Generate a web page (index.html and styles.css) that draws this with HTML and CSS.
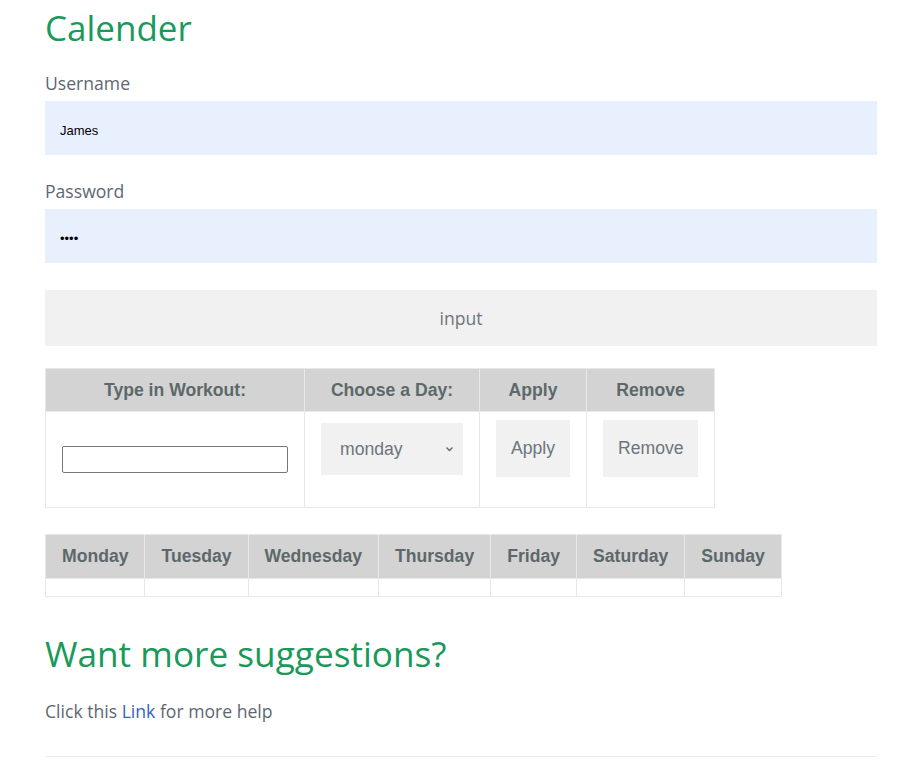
FILE: index.html
```html
<!DOCTYPE html>
<html>
<head>
<meta charset="utf-8">
<title>Calender</title>
<link rel="stylesheet" href="styles.css">
</head>
<body>
<div class="page">
  <h1 class="title">Calender</h1>
  <form class="login">
    <label class="field-label" for="username">Username</label>
    <input class="field" id="username" type="text" value="James">
    <label class="field-label pw-label" for="password">Password</label>
    <input class="field" id="password" type="password" value="abcd">
    <button class="submit" type="button">input</button>
  </form>

  <table class="workout">
    <thead>
      <tr>
        <th class="c1">Type in Workout:</th>
        <th class="c2">Choose a Day:</th>
        <th class="c3">Apply</th>
        <th class="c4">Remove</th>
      </tr>
    </thead>
    <tbody>
      <tr>
        <td class="cell-input"><input class="workout-input" type="text"></td>
        <td class="cell-select">
          <div class="select">
            <span>monday</span>
            <svg class="chev" width="9" height="6" viewBox="0 0 9 6"><path d="M1.5 1.5 L4.5 4.5 L7.5 1.5" fill="none" stroke="#666" stroke-width="1.4"/></svg>
          </div>
        </td>
        <td class="cell-btn"><button class="gbtn apply" type="button">Apply</button></td>
        <td class="cell-btn"><button class="gbtn remove" type="button">Remove</button></td>
      </tr>
    </tbody>
  </table>

  <table class="week">
    <thead>
      <tr>
        <th>Monday</th>
        <th>Tuesday</th>
        <th>Wednesday</th>
        <th>Thursday</th>
        <th>Friday</th>
        <th>Saturday</th>
        <th>Sunday</th>
      </tr>
    </thead>
    <tbody>
      <tr><td></td><td></td><td></td><td></td><td></td><td></td><td></td></tr>
    </tbody>
  </table>

  <h2 class="subtitle">Want more suggestions?</h2>
  <p class="help">Click this <a href="#" class="link">Link</a> for more help</p>
  <hr class="rule">
</div>
</body>
</html>
```

FILE: styles.css
```css
html, body {
  margin: 0;
  padding: 0;
  background: #ffffff;
}
body {
  font-family: "Open Sans", "Liberation Sans", sans-serif;
  color: #5d6770;
}
.page {
  width: 832px;
  margin-left: 45px;
  padding-top: 6px;
}
.title {
  font-size: 35px;
  line-height: 43px;
  font-weight: 400;
  color: #19995a;
  margin: 0 0 21px 0;
}
.login {
  display: flex;
  flex-direction: column;
}
.field-label {
  font-size: 17.6px;
  line-height: 27px;
  margin-bottom: 4px;
}
.pw-label {
  margin-top: 23px;
}
.field {
  height: 54px;
  box-sizing: border-box;
  border: none;
  background: #e8f0fe;
  padding: 4px 15px 0 15px;
  font-family: "Liberation Sans", Arial, sans-serif;
  font-size: 13px;
  color: #000;
  outline: none;
}
.submit {
  margin-top: 27px;
  height: 56px;
  border: none;
  background: #f1f1f1;
  font-family: "Open Sans", sans-serif;
  font-size: 17.6px;
  color: #6c757d;
}
table {
  border-collapse: collapse;
  font-family: "Liberation Sans", Arial, sans-serif;
}
th {
  background: #d3d3d3;
  color: #5d686a;
  font-weight: 700;
  font-size: 17.6px;
  line-height: 21px;
  height: 43px;
  box-sizing: border-box;
  border: 1px solid #e8e8e8;
  padding: 0 16px;
}
td {
  border: 1px solid #e8e8e8;
  padding: 0;
}
.workout {
  margin-top: 22px;
}
.workout .c1 { width: 258px; padding: 0; }
.workout .c2 { width: 174px; padding: 0; }
.workout .c3 { width: 106px; padding: 0; }
.workout .c4 { width: 128px; padding: 0; }
.workout td {
  height: 96px;
  box-sizing: border-box;
  vertical-align: top;
}
.cell-input {
  padding: 34px 16px 0 16px !important;
}
.workout-input {
  display: block;
  width: 226px;
  height: 27px;
  box-sizing: border-box;
  border: 1px solid #767676;
  border-radius: 2px;
  margin: 0;
  padding: 1px 2px;
}
.cell-select {
  padding: 11px 16px 0 16px !important;
}
.select {
  width: 142px;
  height: 52px;
  box-sizing: border-box;
  background: #f1f1f1;
  display: flex;
  align-items: center;
  justify-content: space-between;
  padding: 0 9px 0 19px;
  font-size: 17.6px;
  color: #6c757d;
}
.chev {
  display: block;
}
.cell-btn {
  padding: 8px 16px 0 16px !important;
}
.gbtn {
  display: block;
  height: 57px;
  border: none;
  background: #f1f1f1;
  font-family: "Liberation Sans", Arial, sans-serif;
  font-size: 17.6px;
  color: #6c757d;
  padding: 0 15px;
  margin: 0;
}
.apply { width: 74px; }
.remove { width: 95px; }
.week {
  margin-top: 26px;
}
.week th {
  height: 44px;
}
.week td {
  height: 18px;
  box-sizing: border-box;
}
.subtitle {
  font-size: 35.2px;
  line-height: 43px;
  font-weight: 400;
  color: #19995a;
  margin: 35px 0 0 0;
}
.help {
  font-size: 17.6px;
  line-height: 27px;
  margin: 23px 0 0 0;
}
.link {
  color: #3462c1;
  text-decoration: none;
}
.rule {
  border: none;
  border-top: 1px solid #eaeaea;
  margin: 31px 0 0 0;
}
```
